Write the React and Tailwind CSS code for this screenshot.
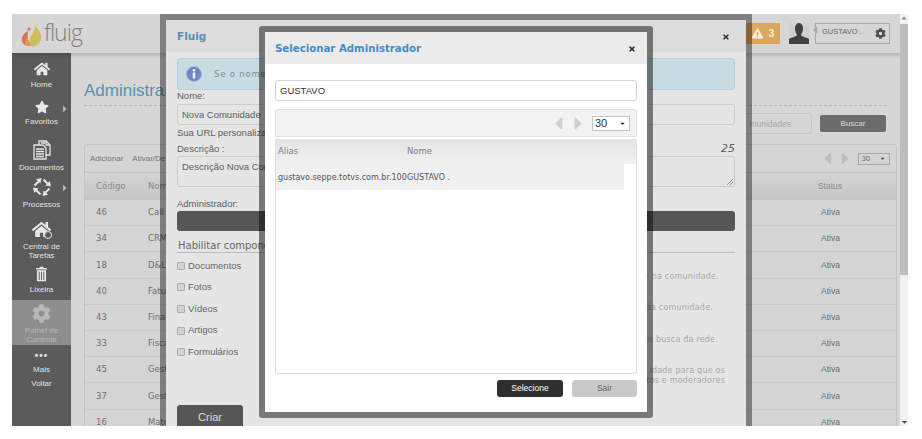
import { FaHome, FaStar, FaCog, FaExclamationTriangle, FaCaretLeft, FaCaretRight, FaCaretDown, FaCaretUp, FaTimes } from "react-icons/fa";

const rows = [
    ["46", "Call Center"],
    ["34", "CRM"],
    ["18", "D&L"],
    ["40", "Faturamento"],
    ["43", "Financeiro"],
    ["33", "Fiscal"],
    ["45", "Gestão"],
    ["37", "Gestão"],
    ["16", "Materiais"],
];

const components = ["Documentos", "Fotos", "Vídeos", "Artigos", "Formulários"];

function DocsIcon() {
    return (
        <svg width="18" height="20" viewBox="0 0 18 20" fill="none" stroke="#e6e6e6" strokeWidth="1.3">
            <path d="M6 1h7l4 4v10H6z" />
            <path d="M13 1v4h4" />
            <path d="M1 5h9l3 3v11H1z" fill="#5b5b5b" />
            <path d="M3 9h8M3 11.5h8M3 14h8M3 16.5h8M8 3h4" />
        </svg>
    );
}

function ProcessArrow({ angle }) {
    return (
        <g transform={`rotate(${angle} 10 10)`}>
            <path d="M2.5 8.5 L6.5 4.5" fill="none" stroke="#e6e6e6" strokeWidth="2" />
            <path d="M9.5 1 L4 2.2 L8.4 6.6z" fill="#e6e6e6" />
        </g>
    );
}

function ProcessIcon() {
    return (
        <svg width="20" height="20" viewBox="0 0 20 20">
            <ProcessArrow angle={0} />
            <ProcessArrow angle={90} />
            <ProcessArrow angle={180} />
            <ProcessArrow angle={270} />
        </svg>
    );
}

function TaskIcon() {
    return (
        <div className="relative">
            <FaHome className="text-[#e6e6e6] text-[19px]" />
            <span className="absolute -right-[1px] bottom-0 w-[8px] h-[8px] rounded-full bg-[#5b5b5b] border border-[#e6e6e6]" />
        </div>
    );
}

function TrashIcon() {
    return (
        <svg width="11" height="16" viewBox="0 0 12 16" fill="#e6e6e6">
            <path d="M4 0h4v1.5h4V3H0V1.5h4z" />
            <path d="M1 4h10v12H1zM3 5.5v9h1v-9zM5.5 5.5v9h1v-9zM8 5.5v9h1v-9z" fillRule="evenodd" />
        </svg>
    );
}

function NavItem({ icon, label, className, arrow }) {
    return (
        <div className={`relative flex flex-col items-center text-center text-[8px] leading-[9px] ${className}`}>
            {icon}
            <span className="mt-[3px] w-[52px]">{label}</span>
            {arrow ? <FaCaretRight className="absolute right-[1px] top-[11px] text-[#bdbdbd] text-[10px]" /> : null}
        </div>
    );
}

function Sidebar() {
    return (
        <div className="w-[59px] h-full shrink-0 bg-[#5b5b5b] flex flex-col text-[#e2e2e2]">
            <NavItem className="h-[40px] pt-[8px]" icon={<FaHome className="text-[#e6e6e6] text-[16px]" />} label="Home" />
            <NavItem className="h-[38px] pt-[7px]" arrow icon={<FaStar className="text-[#e6e6e6] text-[14px]" />} label="Favoritos" />
            <NavItem className="h-[41px] pt-[9px]" icon={<DocsIcon />} label="Documentos" />
            <NavItem className="h-[37px] pt-[5px]" arrow icon={<ProcessIcon />} label="Processos" />
            <NavItem className="h-[52px] pt-[11px]" icon={<TaskIcon />} label="Central de Tarefas" />
            <NavItem className="h-[39px] pt-[5px]" icon={<TrashIcon />} label="Lixeira" />
            <NavItem className="h-[45px] pt-[4px] bg-[#8e8e8e] text-[#b5b5b5]" icon={<FaCog className="text-[#b8b8b8] text-[19px]" />} label="Painel de Controle" />
            <div className="flex flex-col items-center text-[8px] pt-[7px]">
                <span className="text-[10px] leading-[8px] tracking-[1px] font-bold">•••</span>
                <span className="mt-[5px] leading-[10px]">Mais</span>
                <span className="mt-[4px] leading-[10px]">Voltar</span>
            </div>
        </div>
    );
}

function Header() {
    return (
        <div className="h-[39px] shrink-0 bg-[#d6d6d6] shadow-[0_2px_4px_rgba(0,0,0,0.18)] flex items-center relative z-10">
            <div className="ml-[9px] flex items-center">
                <svg width="21" height="28" viewBox="0 0 21 28" className="shrink-0">
                    <path d="M14 6c4 3 7 8 6 13-1 6-6 8-10 7-3-2-2-6 0-10 2-3 4-6 4-10z" fill="#d8bd55" />
                    <path d="M15 12c3 4 3 8 1 11-2 2-4 3-6 3 1-5 3-9 5-14z" fill="#bcc266" />
                    <path d="M7 11c-4 2-7 6-6 10 1 4 5 5 9 5-3-4-4-9-3-15z" fill="#d9735f" />
                    <path d="M7 16c-1 4 0 7 3 10-3 0-5-1-6-3 0-3 1-5 3-7z" fill="#e09a4f" />
                    <circle cx="12" cy="3" r="2" fill="#e5d9ac" />
                    <circle cx="8" cy="9" r="1.5" fill="#d9735f" />
                </svg>
                <span className="text-[#808080] text-[23px] leading-none ml-[2px] -mt-[2px] font-['Open_Sans',sans-serif] font-light tracking-[-1px]">fluig</span>
            </div>
            <div className="ml-auto mr-[10px] flex items-center">
                <div className="w-[34px] h-[21px] bg-[#dda85a] flex items-center justify-center gap-[6px] text-[#eeeeee] text-[10px] font-bold">
                    <FaExclamationTriangle className="text-[#eeeeee] text-[11px]" />3
                </div>
                <svg width="20" height="21" viewBox="0 0 20 21" className="ml-[9px]">
                    <rect width="20" height="21" fill="#cfcfcf" />
                    <path d="M6 5c0-3 2-5 4-5s4 2 4 5-1 5-2 7c1 2 5 2 8 4v5H0v-5c3-2 7-2 8-4-1-2-2-4-2-7z" fill="#3f3f3f" />
                </svg>
                <div className="ml-[6px] w-[75px] h-[21px] border border-[#a9a9a9] flex items-start justify-between pl-[6px] pr-[3px] text-[7.5px] text-[#666666] leading-[15px] relative">
                    <FaCaretLeft className="absolute -left-[7px] top-0 text-[#a9a9a9] text-[12px]" />
                    <span>GUSTAVO .</span>
                    <FaCog className="text-[#4e4e4e] text-[11px] mt-[4px]" />
                </div>
            </div>
        </div>
    );
}

function Background() {
    return (
        <div className="flex-1 min-w-0 h-full bg-[#d6d6d6] pl-[13px] pr-[3px]">
            <div className="mr-[10px] h-[53px] border-b border-dashed border-[#b5b5b5] pt-[26px] text-[17px] leading-[24px] text-[#5a90b3]">Administrar</div>
            <div className="h-[38px] flex justify-end items-center pr-[11px] pb-[3px]">
                <div className="w-[80px] h-[21px] rounded-[3px] border border-[#c6c6c6] text-right pr-[20px] text-[8.5px] leading-[21px] text-[#a9a9a9]">munidades</div>
                <div className="w-[66px] h-[17px] ml-[8px] rounded-[2px] bg-[#6c6c6c] text-center text-[8px] leading-[17px] text-[#dddddd]">Buscar</div>
            </div>
            <div className="border border-[#c4c4c4] rounded-t-[3px] bg-[#d4d4d4]">
                <div className="h-[28px] flex items-center pl-[5px] pr-[6px] text-[8px] text-[#777777] border-b border-[#c2c2c2]">
                    <span>Adicionar</span>
                    <span className="ml-[9px]">Ativar/Desativar</span>
                    <div className="ml-auto flex items-center text-[#bdbdbd]">
                        <FaCaretLeft className="text-[19px]" />
                        <FaCaretRight className="text-[19px] -ml-[1px]" />
                        <div className="ml-[3px] w-[32px] h-[12px] border border-[#a8a8a8] text-[7px] leading-[10px] text-[#666666] flex justify-between items-center px-[3px]">
                            30 <FaCaretDown className="text-[#555555] text-[7px]" />
                        </div>
                    </div>
                </div>
                <div className="h-[27px] flex items-center bg-gradient-to-b from-[#d4d4d4] to-[#c5c5c5] text-[8.5px] text-[#8a8a8a] font-['DejaVu_Sans',sans-serif]">
                    <span className="w-[63px] pl-[11px]">Código</span>
                    <span className="flex-1">Nome</span>
                    <span className="w-[140px] font-['Liberation_Sans',sans-serif] pr-[54px] text-right">Status</span>
                </div>
                {rows.map((row) => (
                    <div key={row[0]} className="h-[26.2px] flex items-center border-b border-[#c8c8c8] text-[8.5px] text-[#6f6f6f] font-['DejaVu_Sans',sans-serif]">
                        <span className="w-[63px] pl-[11px]">{row[0]}</span>
                        <span className="flex-1">{row[1]}</span>
                        <span className="w-[140px] font-['Liberation_Sans',sans-serif] pr-[56px] text-right">Ativa</span>
                    </div>
                ))}
            </div>
        </div>
    );
}

function CommunityModal() {
    return (
        <div className="absolute z-20 left-[148px] top-0 w-[592px] h-[430px] border-[6px] border-b-0 border-[rgba(0,0,0,0.4)] bg-[#e5e5e5] bg-clip-padding text-[#5c5c5c] text-[9.5px] font-['Liberation_Sans',sans-serif]">
            <div className="h-[32px] pt-[2px] bg-[#dcdcdc] flex items-center justify-between pl-[11px] pr-[16px]">
                <span className="font-['DejaVu_Sans',sans-serif] font-bold text-[10.5px] text-[#5a90b8]">Fluig</span>
                <FaTimes className="text-[#2f2f2f] text-[8px]" />
            </div>
            <div className="px-[11px] pt-[6px]">
                <div className="h-[32px] rounded-[3px] border border-[#b5d3de] bg-[#c9dbe3] flex items-center pl-[8px]">
                    <svg width="16" height="16" viewBox="0 0 16 16">
                        <circle cx="8" cy="8" r="7.5" fill="#6f86c4" stroke="#a9b5d8" />
                        <circle cx="8" cy="4.2" r="1.3" fill="#f3f3f3" />
                        <rect x="6.8" y="6.5" width="2.4" height="6" fill="#f3f3f3" />
                    </svg>
                    <span className="ml-[12px] text-[8.5px] tracking-[0.8px] text-[#7f8c92] font-['DejaVu_Sans',sans-serif]">Se o nome da comunidade</span>
                </div>
                <div className="leading-[11px]">Nome:</div>
                <div className="mt-[3px] h-[21px] rounded-[3px] border border-[#cdcdcd] pl-[4px] leading-[20px]">Nova Comunidade</div>
                <div className="mt-[2px] leading-[11px]">Sua URL personalizada</div>
                <div className="mt-[5px] flex justify-between leading-[11px]">
                    <span>Descrição :</span>
                    <span className="text-[11px] italic font-['DejaVu_Sans',sans-serif]">25</span>
                </div>
                <div className="relative mt-[2px] h-[31px] rounded-[3px] border border-[#cdcdcd] pl-[4px] pt-[3px] leading-[14px]">
                    Descrição Nova Comunidade
                    <svg width="6" height="6" viewBox="0 0 6 6" className="absolute right-[1px] bottom-[1px]" stroke="#9a9a9a">
                        <path d="M0 6 6 0M3 6l3-3" />
                    </svg>
                </div>
                <div className="mt-[11px] leading-[11px]">Administrador:</div>
                <div className="mt-[2px] h-[20px] rounded-[3px] bg-[#565656]" />
                <div className="mt-[9px] h-[13px] border-b border-[#bdbdbd] leading-[12px] text-[10px] font-['DejaVu_Sans',sans-serif] pl-[1px] text-[#666666]">Habilitar componentes</div>
                <div className="relative">
                    <div className="flex flex-col pt-[2px]">
                        {components.map((name) => (
                            <div key={name} className="h-[21.6px] flex items-center gap-[3px] text-[#666666]">
                                <span className="w-[8px] h-[8px] rounded-[1px] border border-[#adadad] bg-[#d4d4d4]" />
                                {name}
                            </div>
                        ))}
                    </div>
                    <div className="absolute right-[10px] top-[19px] text-right text-[8px] leading-[10px] tracking-[0.2px] text-[#a9a9a9] font-['DejaVu_Sans',sans-serif]">
                        <div className="pr-[6px]">r na comunidade.</div>
                        <div className="mt-[21px] pr-[12px]">da comunidade.</div>
                        <div className="mt-[22px] pr-[7px]">de busca da rede.</div>
                        <div className="mt-[21px]">idade para que os</div>
                        <div>ntos e moderadores</div>
                    </div>
                </div>
                <div className="mt-[42px] w-[66px] h-[30px] rounded-[3px] bg-[#565656] text-center text-[11px] leading-[24px] text-[#dedede]">Criar</div>
            </div>
        </div>
    );
}

function AdminModal() {
    return (
        <div className="absolute z-30 left-[247px] top-[12px] w-[394px] h-[392px] rounded-[3px] border-[6.5px] border-[rgba(0,0,0,0.48)] bg-white bg-clip-padding flex flex-col font-['Liberation_Sans',sans-serif]">
            <div className="h-[32px] pt-[2px] shrink-0 bg-[#ebebeb] flex items-center justify-between pl-[10px] pr-[11px]">
                <span className="font-['DejaVu_Sans',sans-serif] font-bold text-[10.2px] text-[#428bca]">Selecionar Administrador</span>
                <FaTimes className="text-[#222222] text-[8px]" />
            </div>
            <div className="flex-1 min-h-0 px-[10px] pt-[16px] flex flex-col">
                <div className="h-[21px] shrink-0 rounded-[3px] border border-[#d4d4d4] pl-[4px] text-[9.5px] leading-[20px] text-[#333333]">GUSTAVO</div>
                <div className="mt-[8px] h-[28px] shrink-0 rounded-t-[3px] border border-[#e2e2e2] bg-[#f3f3f3] flex items-center justify-end pr-[6px] text-[#cfcfcf]">
                    <FaCaretLeft className="text-[21px]" />
                    <FaCaretRight className="text-[21px] -ml-[1px]" />
                    <div className="ml-[3px] w-[38px] h-[15px] border border-[#c4c4c4] bg-white pl-[2px] pr-[3px] flex items-center justify-between text-[11px] text-[#333333]">
                        30 <FaCaretDown className="text-[#222222] text-[7px]" />
                    </div>
                </div>
                <div className="mt-[1.5px] h-[235.5px] shrink-0 border border-t-0 border-[#dddddd] rounded-b-[3px]">
                    <div className="h-[25px] bg-gradient-to-b from-[#e4e4e4] to-[#f0f0f0] flex items-center text-[8.5px] text-[#808080] font-['DejaVu_Sans',sans-serif]">
                        <span className="pl-[2px] w-[131px]">Alias</span>
                        <span>Nome</span>
                    </div>
                    <div className="h-[26px] pt-[2px] mr-[12px] bg-[#f0f0f0] flex items-center text-[8px] text-[#555555] font-['DejaVu_Sans',sans-serif] whitespace-nowrap">
                        <span className="pl-[2px] w-[131px]">gustavo.seppe.totvs.com.br.100</span>
                        <span>GUSTAVO .</span>
                    </div>
                </div>
                <div className="mt-[6px] flex justify-end gap-[9px] text-[8.5px]">
                    <div className="w-[66px] h-[17px] rounded-[3px] bg-[#2f2f2f] text-white text-center leading-[17px]">Selecione</div>
                    <div className="w-[65px] h-[17px] rounded-[3px] bg-[#c9c9c9] text-[#666666] text-center leading-[17px]">Sair</div>
                </div>
            </div>
        </div>
    );
}

function App() {
    return (
        <div className="w-[922px] h-[439px] bg-white pt-[14px] pl-[12px] overflow-hidden font-['Liberation_Sans',sans-serif]">
            <div className="relative w-[896px] h-[412px] overflow-hidden flex">
                <div className="flex-1 min-w-0 h-full flex flex-col">
                    <Header />
                    <div className="flex-1 min-h-0 flex">
                        <Sidebar />
                        <Background />
                    </div>
                </div>
                <div className="w-[8px] h-full shrink-0 bg-[#f1f1f1] flex flex-col items-center relative z-10">
                    <FaCaretUp className="text-[#888888] text-[6px] h-[8px]" />
                    <div className="w-full h-[251px] mt-[2px] bg-[#bdbdbd]" />
                    <FaCaretDown className="text-[#444444] text-[7px] h-[8px] mt-auto" />
                </div>
                <CommunityModal />
                <AdminModal />
            </div>
        </div>
    );
}

export default App;
